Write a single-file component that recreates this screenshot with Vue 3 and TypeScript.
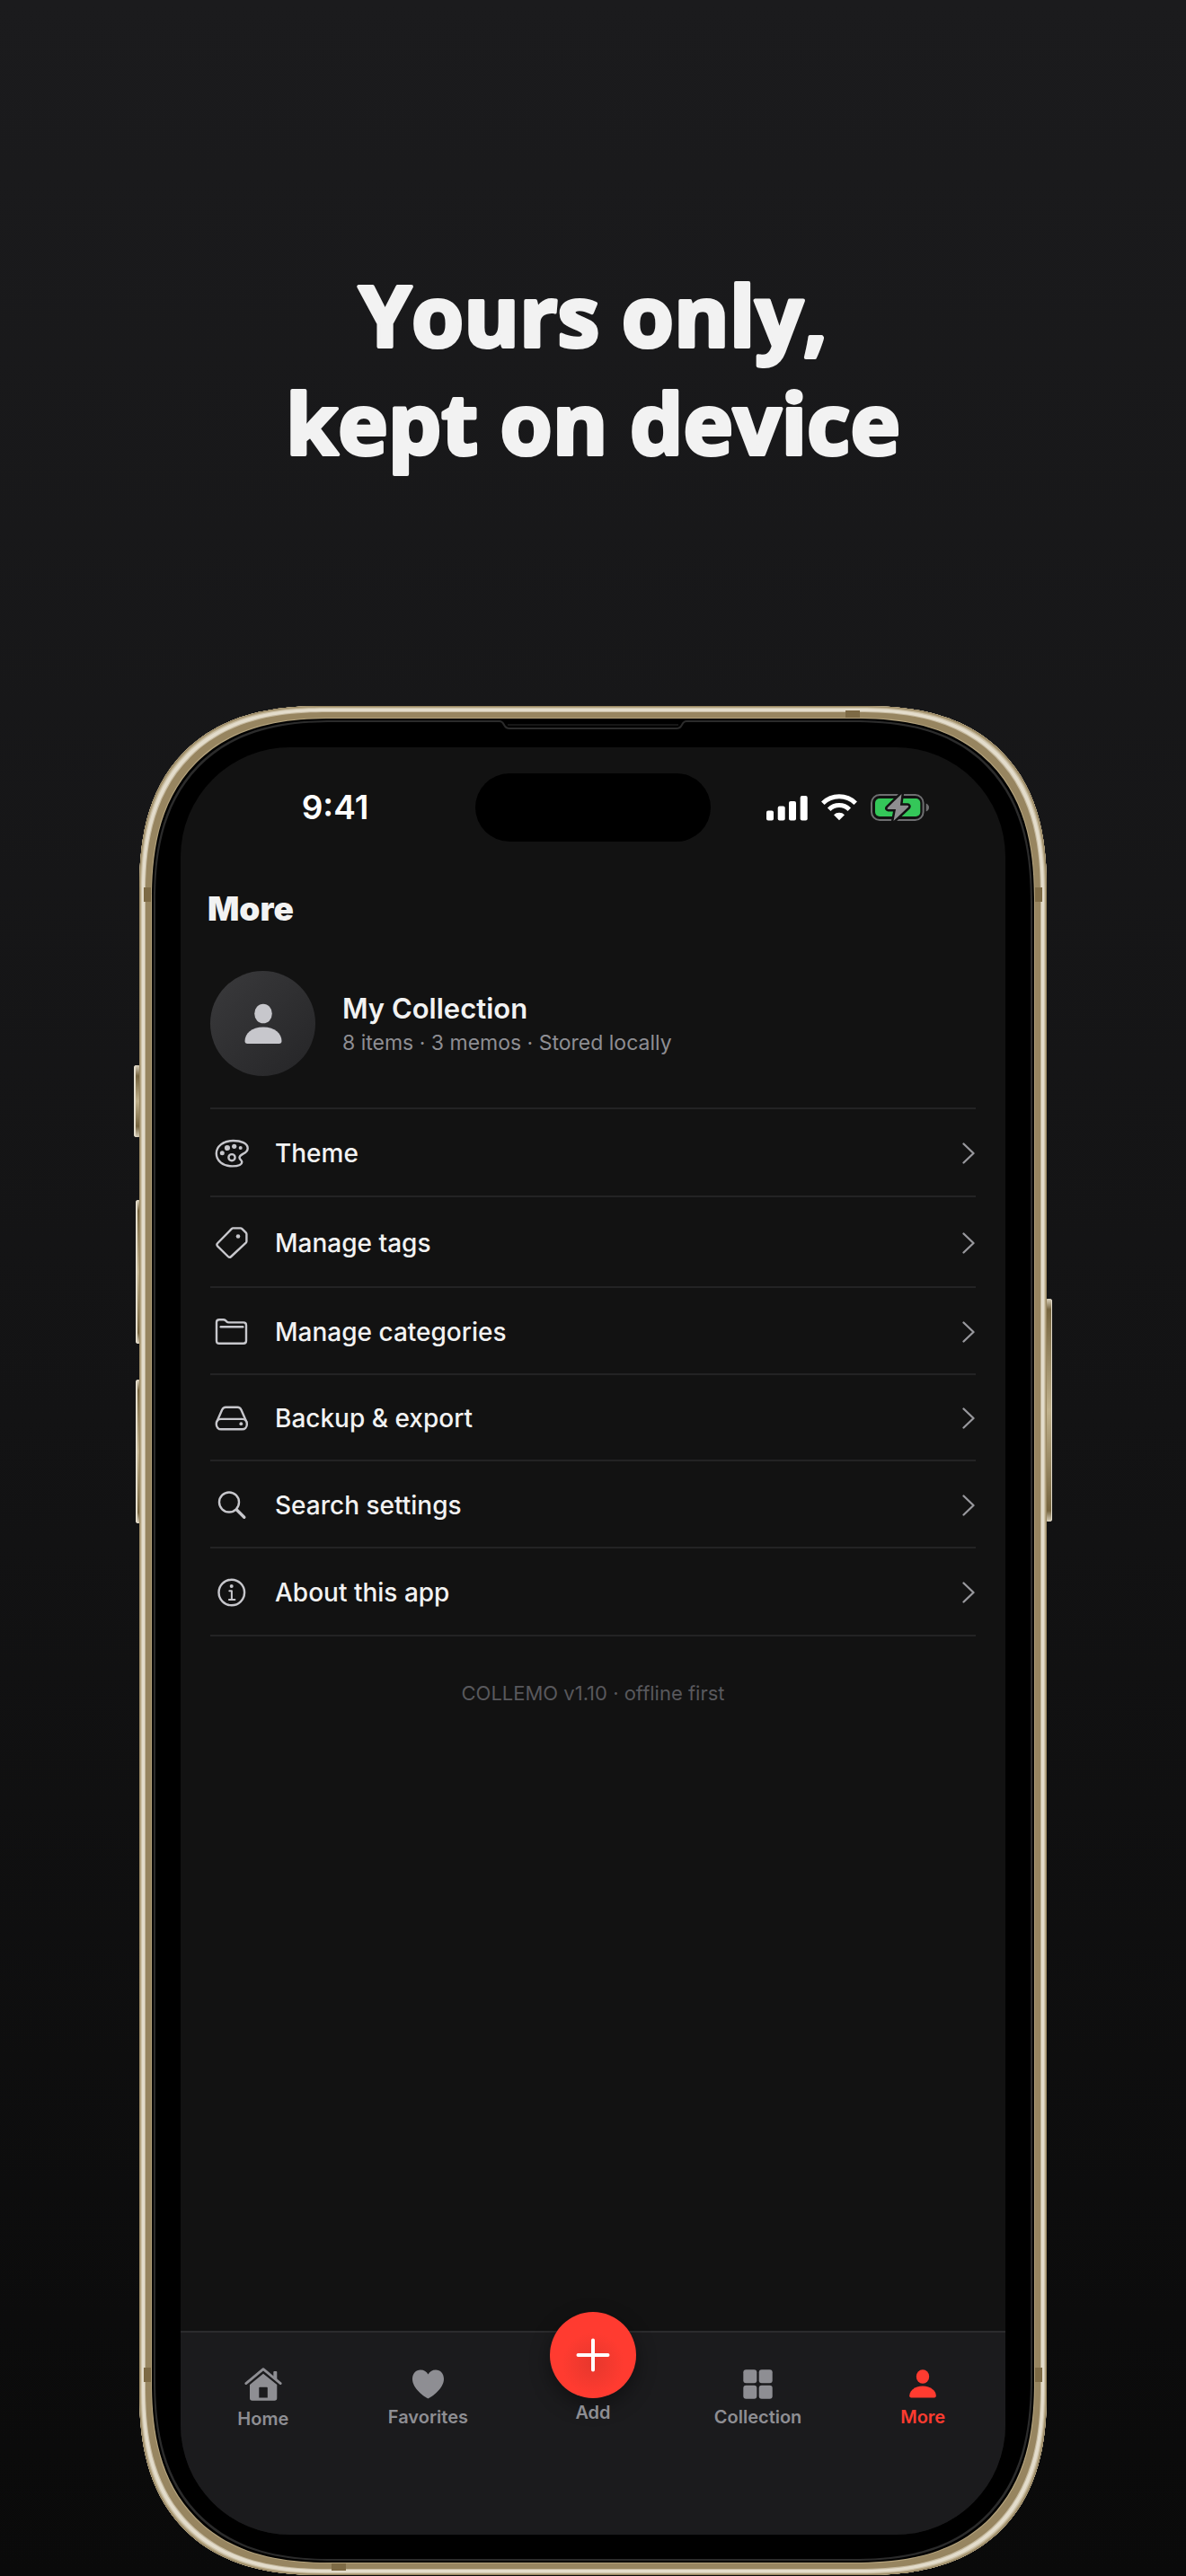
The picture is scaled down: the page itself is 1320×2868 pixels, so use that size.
<script setup lang="ts">
type IconName = 'palette' | 'tag' | 'folder' | 'drive' | 'search' | 'info'
type TabIcon = 'home' | 'heart' | 'plus' | 'grid' | 'person'

interface Row {
  icon: IconName
  label: string
  height: number
}

interface Tab {
  icon: TabIcon
  label: string
  active?: boolean
}

const headline: string[] = ['Yours only,', 'kept on device']

const rows: Row[] = [
  { icon: 'palette', label: 'Theme', height: 34 },
  { icon: 'tag', label: 'Manage tags', height: 37 },
  { icon: 'folder', label: 'Manage categories', height: 33 },
  { icon: 'drive', label: 'Backup & export', height: 32 },
  { icon: 'search', label: 'Search settings', height: 33 },
  { icon: 'info', label: 'About this app', height: 34 },
]

const tabs: Tab[] = [
  { icon: 'home', label: 'Home' },
  { icon: 'heart', label: 'Favorites' },
  { icon: 'plus', label: 'Add' },
  { icon: 'grid', label: 'Collection' },
  { icon: 'person', label: 'More', active: true },
]
</script>

<template>
  <main class="page">
    <h1 class="headline">
      <svg class="headline-art" viewBox="0 0 760 270">
        <text v-for="(line, i) in headline" :key="line" x="380" :y="106 + i * 120" text-anchor="middle">{{ line }}</text>
      </svg>
    </h1>

    <div class="device">
      <span class="key key-action"></span>
      <span class="key key-up"></span>
      <span class="key key-down"></span>
      <span class="key key-power"></span>
      <div class="shell">
        <span class="band band-left band-high"></span>
        <span class="band band-right band-high"></span>
        <span class="band band-left band-low"></span>
        <span class="band band-right band-low"></span>
        <span class="band band-top"></span>
        <span class="band band-bottom"></span>
        <svg class="earpiece" viewBox="0 0 210 12" aria-hidden="true">
          <rect width="210" height="5" fill="#000" />
          <path d="M0 2h1q3 0 5 4t6 4h186q4 0 6-4t5-4h1" fill="none" stroke="#2b2b2b" stroke-width="2" />
          <path d="M10 6h190" stroke="#161616" stroke-width="2" />
        </svg>

        <div class="screen">
          <div class="status">
            <time class="clock">9:41</time>
            <span class="island"></span>
            <div class="signals">
              <svg width="46" height="29" viewBox="0 0 46 29" fill="#fff" aria-hidden="true">
                <rect x="0" y="17.5" width="8" height="11" rx="2" />
                <rect x="12.7" y="12.5" width="8" height="16" rx="2" />
                <rect x="25" y="7" width="8" height="21.500" rx="2" />
                <rect x="37.700" y="1" width="8" height="27.500" rx="2" />
              </svg>
              <svg width="40" height="30" viewBox="0 0 40 30" fill="none" stroke="#fff" stroke-width="5" aria-hidden="true">
                <path d="M1.800 10.200A26 26 0 0 1 38.200 10.200" />
                <path d="M8.700 17.200A16 16 0 0 1 31.300 17.200" />
                <path d="M20 29.300 14 23.200a8.500 8.500 0 0 1 12 0z" fill="#fff" stroke="none" />
              </svg>
              <svg width="66" height="32" viewBox="0 -1 66 32" aria-hidden="true">
                <rect x="1" y="1" width="57.600" height="28" rx="9" fill="none" stroke="#6e6e70" stroke-width="2" />
                <rect x="5" y="5" width="50.300" height="20" rx="5" fill="#34c759" />
                <path d="M61.700 10.500q3.300 1.500 3.300 4.500t-3.300 4.500z" fill="#6e6e70" />
                <path d="M34.500 0 18.800 15.200q-1 1.500 1 1.800h8.200L25.500 30 41.900 14.600q1-1.600-1-1.800h-8z" fill="#8e8e90" stroke="#121212" stroke-width="5" paint-order="stroke" stroke-linejoin="round" />
              </svg>
            </div>
          </div>

          <h2 class="title">More</h2>

          <section class="profile">
            <span class="avatar">
              <svg width="42" height="46" viewBox="0 0 42 46" fill="#c7c7cc" aria-hidden="true">
                <ellipse cx="21" cy="11.500" rx="9.800" ry="10.800" />
                <path d="M3.500 45Q.5 45 .5 42C.5 34 8 26.500 21 26.500S41.500 34 41.500 42q0 3-3 3z" />
              </svg>
            </span>
            <div class="profile-text">
              <strong class="name">My Collection</strong>
              <span class="stats">8 items · 3 memos · Stored locally</span>
            </div>
          </section>

          <ul class="rows">
            <li v-for="row in rows" :key="row.label">
              <button type="button" class="row">
                <svg class="row-icon" width="38" :height="row.height" :viewBox="`0 0 38 ${row.height}`" aria-hidden="true">
                  <g v-if="row.icon === 'palette'">
                    <path d="M20.500 3C9.500 3 1.800 9.300 1.800 17.300S9 31.400 19.500 31.400c6.200 0 10.800-1.600 10.800-4.600 0-2.200-2.800-2.600-2.800-5 0-4.600 9.200-4 9.200-10.400C36.700 6 29.500 3 20.500 3Z" />
                    <circle cx="19" cy="21.700" r="3.600" />
                    <g class="solid">
                      <circle cx="8.300" cy="16.700" r="2.500" />
                      <circle cx="14" cy="11" r="3.100" />
                      <circle cx="21.700" cy="9.300" r="2.600" />
                      <circle cx="28.700" cy="11" r="2" />
                    </g>
                  </g>
                  <g v-else-if="row.icon === 'tag'">
                    <path d="M20.300 2.400h8.400q1 0 1.700.7l4.300 4.300q.7.700.7 1.700v8q0 .8-.7 1.500L18.200 34q-1.700 1.600-3.300 0L3.300 22.600q-1.800-1.800 0-3.600L18.800 3.100q.7-.7 1.500-.7z" />
                    <circle class="solid" cx="26" cy="11.500" r="2.300" />
                  </g>
                  <g v-else-if="row.icon === 'folder'">
                    <path d="M2 6.200q0-3 3-3h4.500q1.500 0 2.500 1l1.200 1.200q1 1 2.500 1H32q3 0 3 3v17.400q0 3-3 3H5q-3 0-3-3z" />
                    <path d="M6.700 11.200h24.600" />
                  </g>
                  <g v-else-if="row.icon === 'drive'">
                    <path d="m2.500 19.500 5.700-12.900q1.200-2.900 4-2.900h13.200q2.800 0 4 2.900l5.700 12.900" />
                    <rect x="1.800" y="16.900" width="34" height="11.400" rx="5.200" />
                    <circle class="solid" cx="29.300" cy="22.200" r="1.900" />
                  </g>
                  <g v-else-if="row.icon === 'search'">
                    <circle cx="16" cy="13.500" r="11" />
                    <path d="m24.500 22 8.300 8.300" stroke-width="3.400" />
                  </g>
                  <g v-else>
                    <circle cx="18.800" cy="17" r="14.300" />
                    <path d="M16.300 15.300h2.600V25m-3 0h6.500" stroke-width="2" />
                    <circle class="solid" cx="18.700" cy="10" r="2" />
                  </g>
                </svg>
                <span class="row-label">{{ row.label }}</span>
                <svg width="15" height="24" viewBox="0 0 15 24" fill="none" stroke="#98989d" stroke-width="2.300" stroke-linecap="round" stroke-linejoin="round" aria-hidden="true">
                  <path d="m1.500 1.500 11 10.500-11 10.500" />
                </svg>
              </button>
            </li>
          </ul>

          <p class="version">COLLEMO v1.10 · offline first</p>

          <nav class="tabs">
            <a v-for="tab in tabs" :key="tab.label" href="#" class="tab" :class="{ active: tab.active }">
              <svg v-if="tab.icon === 'home'" width="42" height="37" viewBox="0 0 41.400 37" fill="currentColor" aria-hidden="true">
                <path d="M1.500 17.600 20.700 1.700l19.200 15.900" fill="none" stroke="currentColor" stroke-width="2.800" stroke-linecap="round" stroke-linejoin="round" />
                <path d="M32 5q0-1 1-1h2q1 0 1 1v9.500l-4-3.300z" />
                <path fill-rule="evenodd" d="M20.700 6.700 36 19v15q0 2.800-2.800 2.800H8.500q-2.800 0-2.800-2.800V19zM16.800 21.800q-.8 0-.8.800v11h9.500v-11q0-.8-.8-.8z" />
              </svg>
              <svg v-else-if="tab.icon === 'heart'" width="35" height="33" viewBox="0 0 35 33" fill="currentColor" aria-hidden="true">
                <path d="M17.500 32.500C14 31 0 21.500 0 10.800 0 4.500 4 .5 9 .5c4 0 7 2 8.500 5 1.500-3 4.500-5 8.500-5 5 0 9 4 9 10.300C35 21.500 21 31 17.500 32.500z" />
              </svg>
              <span v-else-if="tab.icon === 'plus'" class="add">
                <svg width="38" height="38" viewBox="0 0 38 38" fill="none" stroke="#fff" stroke-width="4" stroke-linecap="round" aria-hidden="true">
                  <path d="M19 2.500v33M2.500 19h33" />
                </svg>
              </span>
              <svg v-else-if="tab.icon === 'grid'" width="33" height="33" viewBox="0 0 33 33" fill="currentColor" aria-hidden="true">
                <rect x=".3" y=".3" width="15" height="15" rx="3" />
                <rect x="17.700" y=".3" width="15" height="15" rx="3" />
                <rect x=".3" y="17.700" width="15" height="15" rx="3" />
                <rect x="17.700" y="17.700" width="15" height="15" rx="3" />
              </svg>
              <svg v-else width="30" height="33" viewBox="0 0 30 33" fill="currentColor" aria-hidden="true">
                <ellipse cx="15" cy="8" rx="7.200" ry="7.700" />
                <path d="M2.200 31.500Q.2 31.500.2 29.200C.2 24 6 18.500 15 18.500s14.800 5.500 14.800 10.700q0 2.300-2 2.300z" />
              </svg>
              <span class="tab-label">{{ tab.label }}</span>
            </a>
          </nav>
        </div>
      </div>
    </div>
  </main>
</template>

<style>
body {
  margin: 0;
  background: #0b0b0b;
}
</style>

<style scoped>
.page {
  box-sizing: border-box;
  min-height: 100vh;
  display: flex;
  flex-direction: column;
  align-items: center;
  background: linear-gradient(#1b1b1d, #131314 55%, #0a0a0a);
  font-family: Inter, 'Liberation Sans', sans-serif;
  color: #f2f2f2;
  overflow: hidden;
}

.headline {
  width: min(760px, 100%);
  margin: 280px 0 236px;
  line-height: 0;
}

.headline-art {
  display: block;
  width: 100%;
  fill: #f2f2f2;
  stroke: #f2f2f2;
  stroke-width: 4px;
  stroke-linejoin: round;
  font-family: 'Open Sans', sans-serif;
  font-size: 94px;
  font-weight: 700;
}

.device {
  position: relative;
  width: min(1010px, 100% - 48px);
}

.shell {
  position: relative;
  padding: 46px 46px 45px;
  border-radius: 170px;
  background: #000;
  box-shadow:
    inset 0 0 0 1px #9a8863,
    inset 0 0 0 2px #b5a684,
    inset 0 0 0 3px #cfc4ab,
    inset 0 0 0 6px #e3dccb,
    inset 0 0 0 7px #c5b99f,
    inset 0 0 0 13px #978560,
    inset 0 0 0 14px #b3a27c,
    inset 0 0 0 16px #000,
    inset 0 0 0 18px #2b2b2b;
}

@supports (corner-shape: superellipse(1.3)) {
  .shell {
    border-radius: 206px;
    corner-shape: superellipse(1.3);
  }
}

.key {
  position: absolute;
  border-radius: 3px;
  background: linear-gradient(#d9d0bb, #75643f 12px, #c0b18c 50%, #75643f calc(100% - 12px), #d9d0bb);
}

.key-action {
  left: -6px;
  top: 400px;
  width: 8px;
  height: 80px;
  box-shadow: inset 2px 0 #e3dccb;
}

.key-up,
.key-down {
  left: -4px;
  width: 6px;
  height: 160px;
  box-shadow: inset 2px 0 #e3dccb;
}

.key-up {
  top: 550px;
}

.key-down {
  top: 750px;
}

.key-power {
  right: -6px;
  top: 660px;
  width: 8px;
  height: 248px;
  box-shadow: inset -1px 0 #e3dccb;
}

.band {
  position: absolute;
  width: 8px;
  height: 16px;
  background: #7d6a45;
}

.band-left {
  left: 5px;
}

.band-right {
  right: 5px;
}

.band-high {
  top: 202px;
}

.band-low {
  bottom: 215px;
}

.band-top,
.band-bottom {
  width: 16px;
  height: 8px;
}

.band-top {
  top: 5px;
  right: 208px;
}

.band-bottom {
  bottom: 5px;
  left: 214px;
}

.earpiece {
  position: absolute;
  top: 15px;
  left: 50%;
  width: 210px;
  height: 12px;
  margin-left: -105px;
}

.screen {
  box-sizing: border-box;
  display: flex;
  flex-direction: column;
  aspect-ratio: 918 / 1990;
  padding-top: 29px;
  border-radius: 122px;
  background: #121212;
  overflow: hidden;
}

.status {
  display: grid;
  grid-template-columns: 1fr 262px 1fr;
  align-items: center;
}

.clock {
  padding-left: 16px;
  text-align: center;
  font-size: 37px;
  line-height: 44px;
  font-weight: 600;
  color: #fff;
}

.island {
  height: 76px;
  border-radius: 38px;
  background: #000;
}

.signals {
  display: flex;
  justify-content: center;
  align-items: center;
  gap: 15px;
  padding-right: 22px;
}

.title {
  margin: 53px 30px 47px;
  font-size: 37px;
  line-height: 44px;
  font-weight: 900;
}

.profile {
  display: flex;
  align-items: center;
  gap: 30px;
  padding: 0 33px 35px;
}

.avatar {
  flex: none;
  display: grid;
  place-items: center;
  width: 117px;
  height: 117px;
  border-radius: 50%;
  background: linear-gradient(135deg, #3a3a3c, #252527);
}

.profile-text {
  display: flex;
  flex-direction: column;
  gap: 6px;
}

.name {
  font-size: 31px;
  line-height: 36px;
  font-weight: 600;
}

.stats {
  font-size: 23px;
  line-height: 28px;
  color: #8e8e93;
}

.rows {
  margin: 0 33px;
  padding: 0;
  list-style: none;
  border-top: 2px solid #232324;
}

.row {
  display: flex;
  align-items: center;
  width: 100%;
  padding: 32px 0 30px 5px;
  border: 0;
  border-bottom: 2px solid #232324;
  background: none;
  color: inherit;
  font: inherit;
  text-align: left;
}

.row-icon {
  flex: none;
  margin-right: 29px;
  fill: none;
  stroke: #c7c7cc;
  stroke-width: 2.4;
  stroke-linecap: round;
  stroke-linejoin: round;
}

.solid {
  fill: #c7c7cc;
  stroke: none;
}

.row-label {
  flex: 1;
  font-size: 28px;
  line-height: 32px;
  font-weight: 500;
}

.version {
  margin: 49px 33px;
  text-align: center;
  font-size: 22px;
  line-height: 28px;
  color: #58585c;
}

.tabs {
  display: flex;
  margin-top: auto;
  padding-bottom: 78px;
  border-top: 2px solid #2b2b2d;
  background: #1b1b1d;
}

.tab {
  flex: 1 1 0;
  display: flex;
  flex-direction: column;
  align-items: center;
  justify-content: center;
  gap: 8px;
  height: 147px;
  color: #8e8e93;
  text-decoration: none;
}

.tab.active {
  color: #ff3b30;
}

.tab-label {
  font-size: 20px;
  line-height: 24px;
  font-weight: 600;
}

.add {
  display: grid;
  place-items: center;
  width: 96px;
  height: 96px;
  margin: -69px 0 -4px;
  border-radius: 50%;
  background: radial-gradient(circle at 50% 60%, #e6372d, #ff3b30 46%);
  box-shadow: 0 8px 22px rgba(0, 0, 0, 0.4);
}
</style>
